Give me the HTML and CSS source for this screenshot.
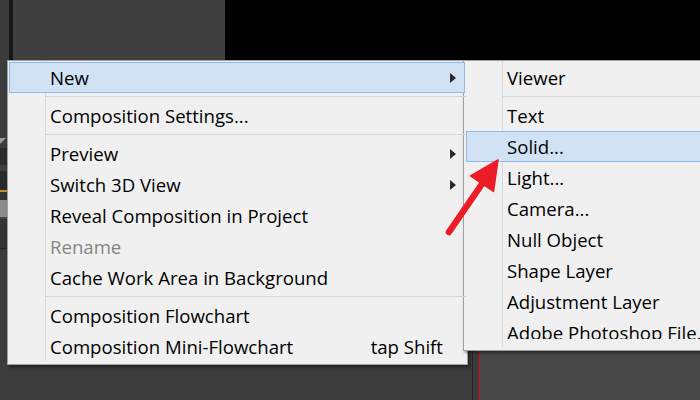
FILE: index.html
```html
<!DOCTYPE html>
<html>
<head>
<meta charset="utf-8">
<link rel="stylesheet" href="styles.css">
</head>
<body>
<div class="screen">
  <div class="bg-top">
    <div class="bt-left"></div>
    <div class="bt-line"></div>
    <div class="bt-panel"></div>
    <div class="bt-black"></div>
  </div>
  <div class="bg-bottom">
    <div class="strip">
      <div class="s s1"></div>
      <div class="s s2"><span class="tri"></span></div>
      <div class="s s3"></div>
      <div class="s s4"></div>
      <div class="s s5"></div>
      <div class="s s6"></div>
      <div class="s s7"></div>
      <div class="s s8"></div>
      <div class="s s9"></div>
      <div class="s s10"></div>
    </div>
    <div class="bb-panel"></div>
    <div class="bb-line"></div>
    <div class="bb-gap"></div>
    <div class="bb-red"></div>
    <div class="bb-right"></div>
  </div>

  <div class="menu main-menu">
    <div class="item active"><span class="label">New</span><span class="sub-arrow"></span></div>
    <div class="sep"></div>
    <div class="item"><span class="label">Composition Settings...</span></div>
    <div class="sep"></div>
    <div class="item"><span class="label">Preview</span><span class="sub-arrow"></span></div>
    <div class="item"><span class="label">Switch 3D View</span><span class="sub-arrow"></span></div>
    <div class="item"><span class="label">Reveal Composition in Project</span></div>
    <div class="item disabled"><span class="label">Rename</span></div>
    <div class="item"><span class="label">Cache Work Area in Background</span></div>
    <div class="sep"></div>
    <div class="item"><span class="label">Composition Flowchart</span></div>
    <div class="item"><span class="label">Composition Mini-Flowchart</span><span class="shortcut">tap Shift</span></div>
  </div>

  <div class="menu sub-menu">
    <div class="item"><span class="label">Viewer</span></div>
    <div class="sep"></div>
    <div class="item"><span class="label">Text</span></div>
    <div class="item active"><span class="label">Solid...</span></div>
    <div class="item"><span class="label">Light...</span></div>
    <div class="item"><span class="label">Camera...</span></div>
    <div class="item"><span class="label">Null Object</span></div>
    <div class="item"><span class="label">Shape Layer</span></div>
    <div class="item"><span class="label">Adjustment Layer</span></div>
    <div class="item"><span class="label clipped">Adobe Photoshop File...</span></div>
  </div>

  <svg class="pointer" width="700" height="400" viewBox="0 0 700 400">
    <line x1="449" y1="232" x2="484" y2="181" stroke="#ec1c28" stroke-width="6.5" stroke-linecap="round"/>
    <polygon points="498,160 470.5,176 493.5,191.5" fill="#ec1c28" stroke="#ec1c28" stroke-width="1.5" stroke-linejoin="round"/>
  </svg>
</div>
</body>
</html>
```

FILE: styles.css
```css
html, body {
  margin: 0;
  padding: 0;
  background: #3c3c3c;
}

.screen {
  position: relative;
  width: 700px;
  height: 400px;
  overflow: hidden;
  display: flex;
  flex-direction: column;
  font-family: "Open Sans", "Noto Sans", "Liberation Sans", sans-serif;
}

/* ---------- background ---------- */
.bg-top {
  display: flex;
  height: 60px;
  flex: none;
}
.bt-left { width: 9px; background: #3b3b3b; }
.bt-line { width: 4px; background: #161616; }
.bt-panel { width: 212px; background: #404040; }
.bt-black { flex: 1; background: #000; }

.bg-bottom {
  display: flex;
  flex: 1;
}
.strip {
  width: 8px;
  display: flex;
  flex-direction: column;
  background: #3c3c3c;
}
.s1 { height: 76px; background: #3c3c3c; }
.s2 { height: 12px; background: #3c3c3c; position: relative; }
.tri {
  position: absolute;
  left: 0;
  top: 2px;
  width: 0;
  height: 0;
  border-left: 6px solid #9a9a9a;
  border-bottom: 6px solid transparent;
}
.s3 { height: 17px; background: #2c2c2c; }
.s4 { height: 6px; background: #3d3d3d; }
.s5 { height: 19px; background: #2a2a2a; }
.s6 { height: 2px; background: #c8901c; }
.s7 { height: 8px; background: #333; }
.s8 { height: 17px; background: #8a8a8a; }
.s9 { height: 29px; background: #343434; border-top: 2px solid #444; border-bottom: 1px solid #222; }
.s10 { flex: 1; background: #3c3c3c; }

.bb-panel { width: 464px; background: #3c3c3c; }
.bb-line { width: 1px; background: #242424; }
.bb-gap { width: 6px; background: #3c3c3c; }
.bb-red { width: 1px; background: #d41010; }
.bb-right { flex: 1; background: #474747; }

/* ---------- menus ---------- */
.menu {
  position: absolute;
  top: 60px;
  box-sizing: border-box;
  background: #f0f0f0;
  border: 1px solid #a0a0a0;
  padding: 1px 0 2px 0;
  box-shadow: 2px 2px 3px rgba(0, 0, 0, 0.45);
  display: flex;
  flex-direction: column;
  font-size: 18.6px;
  color: #000;
}
.menu::before {
  content: "";
  position: absolute;
  top: 0;
  bottom: 3px;
  width: 1px;
  background: #dadada;
}

.main-menu {
  left: 7px;
  width: 461px;
  height: 305px;
}
.main-menu::before { left: 37px; }

.sub-menu {
  left: 463px;
  width: 300px;
  height: 291px;
}
.sub-menu::before { left: 38px; }

.item {
  position: relative;
  height: 31px;
  box-sizing: border-box;
  border: 1px solid transparent;
  margin: 0 2px 0 1px;
  padding-left: 40px;
  display: flex;
  align-items: center;
  white-space: nowrap;
  z-index: 1;
}
.sub-menu .item {
  margin-left: 2px;
  padding-left: 40px;
}
.item.active {
  background: #d0e2f4;
  border-color: #8fb9e8;
}
.item.disabled { color: #858585; }

.label { display: block; }
.clipped {
  height: 19px;
  overflow: hidden;
  margin-top: -6px;
}

.sub-arrow {
  margin-left: auto;
  margin-right: 8px;
  width: 0;
  height: 0;
  border-left: 6px solid #2a2a2a;
  border-top: 5.5px solid transparent;
  border-bottom: 5.5px solid transparent;
}
.shortcut {
  margin-left: auto;
  margin-right: 21px;
}

.sep {
  height: 7px;
  box-sizing: border-box;
  margin-left: 37px;
  padding-top: 3px;
  position: relative;
  z-index: 1;
}
.sep::after {
  content: "";
  display: block;
  height: 1px;
  background: #d6d6d6;
}
.sub-menu .sep { margin-left: 38px; }

/* ---------- annotation ---------- */
.pointer {
  position: absolute;
  left: 0;
  top: 0;
  pointer-events: none;
  z-index: 5;
}
```
